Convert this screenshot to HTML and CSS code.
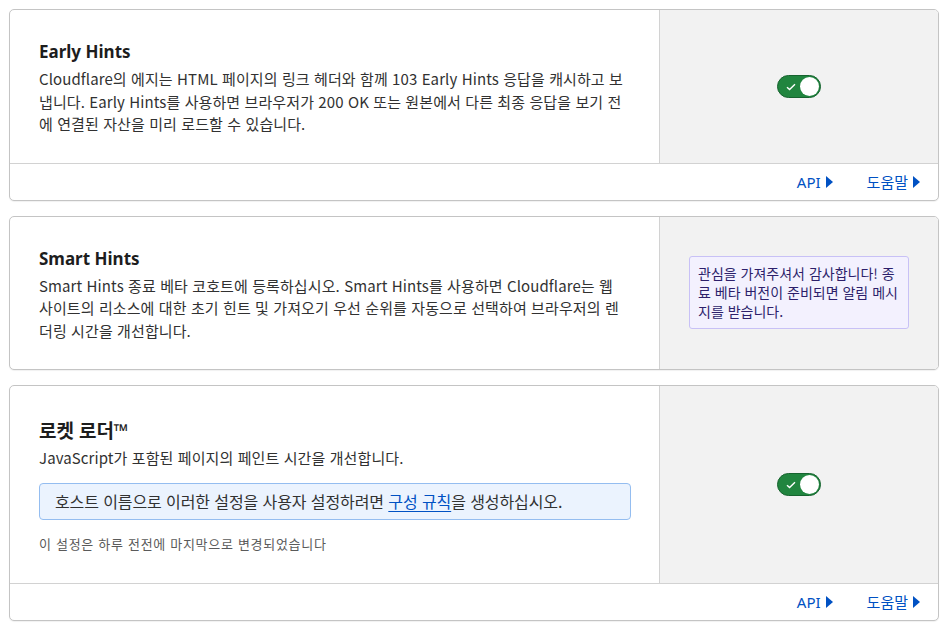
FILE: index.html
```html
<!DOCTYPE html>
<html lang="ko">
<head>
  <meta charset="UTF-8" />
  <meta name="viewport" content="width=device-width, initial-scale=1.0" />
  <title>Speed - Optimization</title>
  <link rel="stylesheet" href="styles.css">
</head>
<body>
  <div class="settings">

    <section class="setting-card">
      <div class="setting-row">
        <div class="setting-main">
          <h3 class="setting-title">Early Hints</h3>
          <p class="setting-desc">Cloudflare의 에지는 HTML 페이지의 링크 헤더와 함께 103 Early Hints 응답을 캐시하고 보냅니다. Early Hints를 사용하면 브라우저가 200 OK 또는 원본에서 다른 최종 응답을 보기 전에 연결된 자산을 미리 로드할 수 있습니다.</p>
        </div>
        <div class="setting-control">
          <button class="toggle on" aria-label="Early Hints">
            <svg class="toggle-check" width="10" height="8" viewBox="0 0 10 8"><path d="M1 4.2l2.6 2.4L9 1.2" fill="none" stroke="#fff" stroke-width="1.4"/></svg>
            <span class="toggle-knob"></span>
          </button>
        </div>
      </div>
      <div class="setting-footer">
        <a href="#" class="footer-link">API<svg width="7" height="12" viewBox="0 0 7 12"><path d="M0 0l7 6L0 12z" fill="currentColor"/></svg></a>
        <a href="#" class="footer-link">도움말<svg width="7" height="12" viewBox="0 0 7 12"><path d="M0 0l7 6L0 12z" fill="currentColor"/></svg></a>
      </div>
    </section>

    <section class="setting-card">
      <div class="setting-row">
        <div class="setting-main">
          <h3 class="setting-title">Smart Hints</h3>
          <p class="setting-desc">Smart Hints 종료 베타 코호트에 등록하십시오. Smart Hints를 사용하면 Cloudflare는 웹 사이트의 리소스에 대한 초기 힌트 및 가져오기 우선 순위를 자동으로 선택하여 브라우저의 렌더링 시간을 개선합니다.</p>
        </div>
        <div class="setting-control">
          <div class="beta-note">관심을 가져주셔서 감사합니다! 종료 베타 버전이 준비되면 알림 메시지를 받습니다.</div>
        </div>
      </div>
    </section>

    <section class="setting-card">
      <div class="setting-row">
        <div class="setting-main setting-main--tall">
          <h3 class="setting-title setting-title--ko">로켓 로더™</h3>
          <p class="setting-desc">JavaScript가 포함된 페이지의 페인트 시간을 개선합니다.</p>
          <div class="info-box">호스트 이름으로 이러한 설정을 사용자 설정하려면 <a href="#">구성 규칙</a>을 생성하십시오.</div>
          <p class="last-changed">이 설정은 하루 전전에 마지막으로 변경되었습니다</p>
        </div>
        <div class="setting-control">
          <button class="toggle on" aria-label="로켓 로더">
            <svg class="toggle-check" width="10" height="8" viewBox="0 0 10 8"><path d="M1 4.2l2.6 2.4L9 1.2" fill="none" stroke="#fff" stroke-width="1.4"/></svg>
            <span class="toggle-knob"></span>
          </button>
        </div>
      </div>
      <div class="setting-footer">
        <a href="#" class="footer-link">API<svg width="7" height="12" viewBox="0 0 7 12"><path d="M0 0l7 6L0 12z" fill="currentColor"/></svg></a>
        <a href="#" class="footer-link">도움말<svg width="7" height="12" viewBox="0 0 7 12"><path d="M0 0l7 6L0 12z" fill="currentColor"/></svg></a>
      </div>
    </section>

  </div>
</body>
</html>
```

FILE: styles.css
```css
:root {
  --text-color: #313131;
  --title-color: #1d1d1d;
  --border-color: #c4c4c4;
  --divider-color: #d2d2d2;
  --panel-bg: #f2f2f2;
  --link-color: #0051c3;
  --toggle-green: #21853f;
  --ko-font: 'Noto Sans CJK KR', 'Noto Sans', sans-serif;
}

body {
  font-family: 'Noto Sans', 'Noto Sans CJK KR', sans-serif;
  color: var(--text-color);
  background: #fff;
  margin: 0;
  padding: 9px 11px 9px 9px;
}

.settings {
  display: flex;
  flex-direction: column;
  gap: 15px;
}

.setting-card {
  border: 1px solid var(--border-color);
  border-radius: 5px;
  background: #fff;
  box-shadow: 0 1px 1px rgba(0, 0, 0, 0.06);
  overflow: hidden;
}

.setting-row {
  display: flex;
}

.setting-main {
  flex: 1;
  padding: 30px 28px 27px 29px;
}

.setting-main--tall {
  padding-top: 33px;
  padding-bottom: 30px;
}

.setting-title {
  margin: 0 0 4px;
  font-size: 17px;
  line-height: 24px;
  font-weight: 700;
  color: var(--title-color);
}

.setting-title--ko {
  font-size: 19px;
}

.setting-desc {
  margin: 0;
  font-family: var(--ko-font);
  font-size: 15px;
  letter-spacing: 0.1px;
  line-height: 22.5px;
}

.setting-control {
  width: 278px;
  flex-shrink: 0;
  background: var(--panel-bg);
  border-left: 1px solid var(--divider-color);
  display: flex;
  align-items: center;
  justify-content: center;
}

.toggle {
  position: relative;
  width: 44px;
  height: 23px;
  padding: 0;
  border-radius: 12px;
  border: 1px solid #17632f;
  background: var(--toggle-green);
  cursor: pointer;
}

.toggle-check {
  position: absolute;
  left: 8px;
  top: 7px;
}

.toggle-knob {
  position: absolute;
  right: 1px;
  top: 1px;
  width: 19px;
  height: 19px;
  border-radius: 50%;
  background: #fff;
}

.beta-note {
  width: 220px;
  box-sizing: border-box;
  padding: 7px 8px;
  background: #f3f1fe;
  border: 1px solid #c8c1f6;
  border-radius: 3px;
  color: #2d1f6b;
  font-family: var(--ko-font);
  font-size: 14px;
  line-height: 19px;
}

.info-box {
  margin: 13px 0 15px;
  padding: 6px 15px;
  background: #ebf3fe;
  border: 1px solid #94bdf0;
  border-radius: 4px;
  font-family: var(--ko-font);
  font-size: 16px;
  letter-spacing: -0.1px;
  line-height: 23px;
}

.info-box a {
  color: var(--link-color);
  text-decoration: underline;
  text-underline-offset: 3px;
}

.last-changed {
  margin: 0;
  font-family: var(--ko-font);
  font-size: 13px;
  letter-spacing: 0.7px;
  line-height: 18px;
  color: #5a5a5a;
}

.setting-footer {
  border-top: 1px solid var(--divider-color);
  height: 36px;
  display: flex;
  align-items: center;
  justify-content: flex-end;
  gap: 34px;
  padding-right: 18px;
}

.footer-link {
  display: flex;
  align-items: center;
  gap: 5px;
  color: var(--link-color);
  text-decoration: none;
  font-size: 15px;
}
```
